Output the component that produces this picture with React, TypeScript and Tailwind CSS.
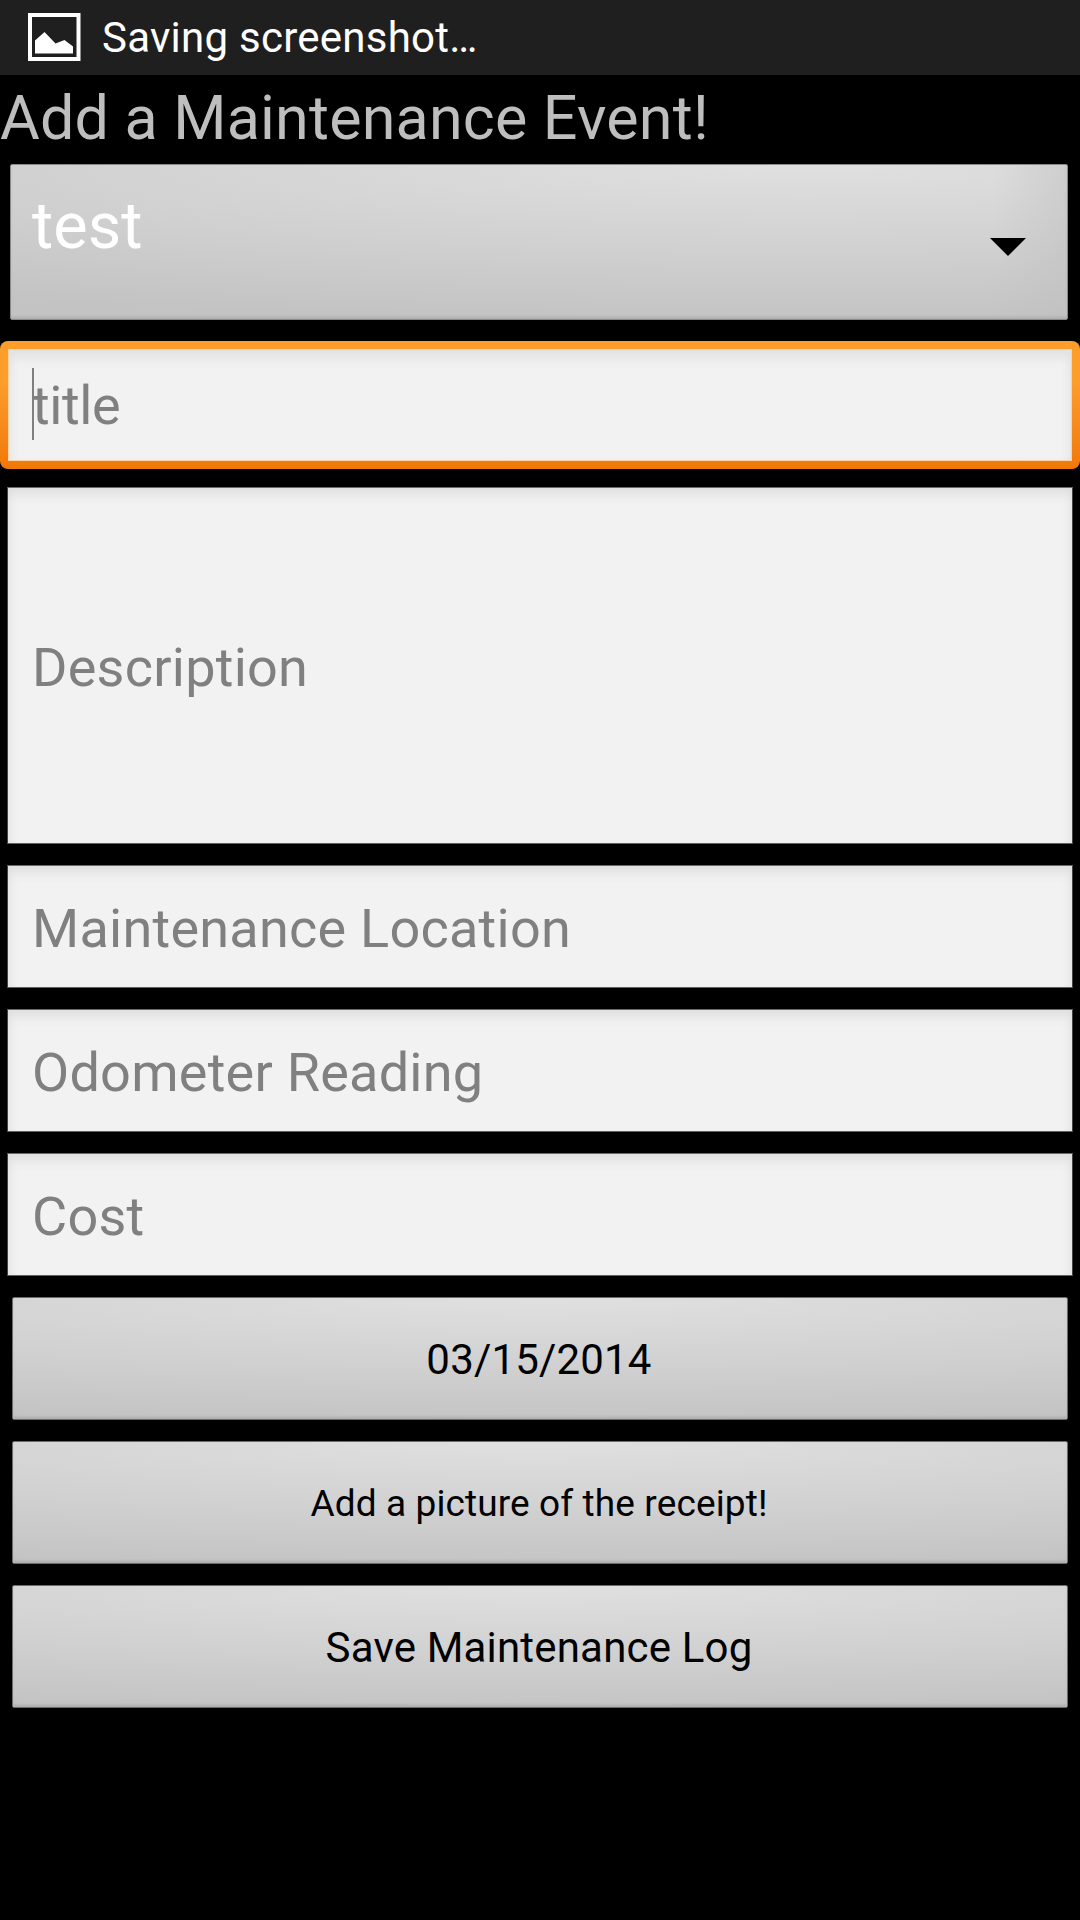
import type { ReactNode } from "react";

function StatusBar() {
  return (
    <header className="flex h-[75px] items-center bg-[#1f1f1f] pl-[28px] text-[42px] leading-[75px] tracking-[0.25px] text-white">
      <svg width="53" height="48" viewBox="0 0 53 48" className="mr-[21px] -mt-px shrink-0">
        <rect x="2" y="2" width="48.5" height="44" fill="none" stroke="#fff" strokeWidth="4" />
        <path d="M7 40.5V27.5L16.500 19L27.500 30.500L36.500 27L45 33.500V40.500Z" fill="#fff" />
      </svg>
      <span>Saving screenshot…</span>
    </header>
  );
}

function Hint({ children }: { children: ReactNode }) {
  return <span className="pt-[4px] tracking-[0.25px]">{children}</span>;
}

function Field({ label, tall = false }: { label: string; tall?: boolean }) {
  return (
    <div
      className={`mx-[7px] flex shrink-0 items-center border border-t-[#6a6a6a] border-r-[#444444] border-b-[#606060] border-l-[#444444] bg-[#f2f2f2] pl-[24px] text-[54px] leading-none text-[#808080] shadow-[inset_0_10px_12px_-4px_#dedede,inset_8px_0_10px_-6px_#e4e4e4,inset_-8px_0_10px_-6px_#e4e4e4] ${tall ? "h-[357px]" : "h-[123px]"}`}
    >
      <Hint>{label}</Hint>
    </div>
  );
}

function FocusedField({ label }: { label: string }) {
  return (
    <div className="mt-[21px] h-[128px] shrink-0 rounded-[8px] bg-linear-to-b from-[#fd9e2b] from-30% to-[#f07807] p-[8px]">
      <div className="flex h-[112px] items-center border border-[#f6d3a8] bg-[#f2f2f2] pl-[23px] text-[54px] leading-none text-[#808080] shadow-[inset_0_12px_12px_-4px_#e2e2e2,inset_8px_0_10px_-6px_#e4e4e4,inset_-8px_0_10px_-6px_#e4e4e4]">
        <span className="-mt-[2px] -mr-[2px] h-[72px] w-[2px] bg-[#808080]" />
        <span className="pt-[2px] tracking-[-0.4px]">{label}</span>
      </div>
    </div>
  );
}

function Button({ children, small = false }: { children: ReactNode; small?: boolean }) {
  return (
    <button
      className={`mx-[12px] flex h-[123px] shrink-0 items-center justify-center rounded-[2px] border border-[#6c6c6c] bg-[radial-gradient(1500px_128px_at_50%_0,#e0e0e0,#c3c3c3)] pr-[2px] leading-none text-black shadow-[inset_0_-3px_3px_-1px_#aeaeae] ${small ? "pt-px text-[37px] tracking-[0.12px]" : "pt-[3px] text-[42px] tracking-[0.18px]"}`}
    >
      {children}
    </button>
  );
}

function Spinner({ value }: { value: string }) {
  return (
    <div className="mr-[12px] ml-[10px] mt-[3px] flex h-[156px] shrink-0 items-start justify-between rounded-[2px] border border-[#8a8a8a] bg-[linear-gradient(to_left,rgba(190,190,190,0.45),transparent_7%),radial-gradient(1500px_158px_at_75%_0,#e0e0e0,#c3c3c3)] pl-[21px] text-white shadow-[inset_0_-3px_3px_-1px_#aeaeae]">
      <span className="text-[65px] leading-[122px]">{value}</span>
      <svg width="36" height="18" viewBox="0 0 36 18" className="mt-[73px] mr-[41px]">
        <path d="M0 0H36L18 18Z" fill="#000" />
      </svg>
    </div>
  );
}

export default function App() {
  return (
    <div className="flex h-[1920px] w-[1080px] flex-col overflow-hidden bg-black font-['Roboto',sans-serif]">
      <StatusBar />
      <h1 className="h-[86px] shrink-0 text-[61px] leading-[86px] tracking-[0.2px] text-[#bebebe]">
        Add a Maintenance Event!
      </h1>
      <Spinner value="test" />
      <FocusedField label="title" />
      <main className="mt-[18px] flex flex-col gap-[21px]">
        <Field label="Description" tall />
        <Field label="Maintenance Location" />
        <Field label="Odometer Reading" />
        <Field label="Cost" />
        <Button>03/15/2014</Button>
        <Button small>Add a picture of the receipt!</Button>
        <Button>Save Maintenance Log</Button>
      </main>
    </div>
  );
}
